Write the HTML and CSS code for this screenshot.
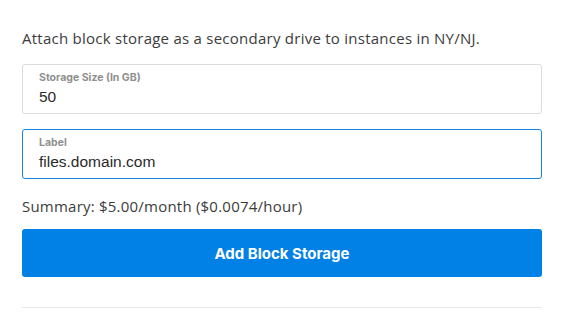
FILE: index.html
```html
<!DOCTYPE html>
<html>
<head>
<meta charset="utf-8">
<link rel="stylesheet" href="styles.css">
</head>
<body>
<div class="panel">
  <p class="desc">Attach block storage as a secondary drive to instances in NY/NJ.</p>
  <div class="field">
    <div class="field-label">Storage Size (In GB)</div>
    <div class="field-value">50</div>
  </div>
  <div class="field focus">
    <div class="field-label">Label</div>
    <div class="field-value">files.domain.com</div>
  </div>
  <p class="summary">Summary: $5.00/month ($0.0074/hour)</p>
  <button class="btn">Add Block Storage</button>
  <div class="divider"></div>
</div>
</body>
</html>
```

FILE: styles.css
```css
html, body { margin: 0; padding: 0; background: #fff; }
.panel {
  width: 520px;
  margin-left: 22px;
  padding-top: 29px;
  display: flex;
  flex-direction: column;
  font-family: "Open Sans", "Lato", sans-serif;
}
.desc {
  margin: 0 0 17px 0;
  font-size: 15px;
  line-height: 18px;
  color: #3c3c3c;
  letter-spacing: 0.25px;
}
.field {
  box-sizing: border-box;
  height: 50px;
  border: 1px solid #dcdcdc;
  border-radius: 3px;
  padding: 6px 16px 0 16px;
  margin-bottom: 15px;
}
.field.focus { border-color: #1583e0; }
.field-label {
  font-family: Inter, "Liberation Sans", sans-serif;
  font-weight: 700;
  font-size: 10.5px;
  line-height: 14px;
  color: #8f8f8f;
}
.field-value {
  font-family: "Liberation Sans", Arial, sans-serif;
  font-size: 15.5px;
  line-height: 22px;
  color: #2a2a2a;
  margin-top: 1px;
}
.summary {
  margin: 3px 0 14px 0;
  font-size: 15px;
  line-height: 18px;
  color: #3c3c3c;
  letter-spacing: 0.22px;
}
.btn {
  height: 48px;
  border: none;
  border-radius: 3px;
  background: #0181e6;
  color: #fff;
  font-family: Inter, "Liberation Sans", sans-serif;
  font-weight: 700;
  font-size: 15px;
  padding: 0;
}
.divider {
  margin-top: 30px;
  height: 1px;
  background: #e8e8e8;
}
```
